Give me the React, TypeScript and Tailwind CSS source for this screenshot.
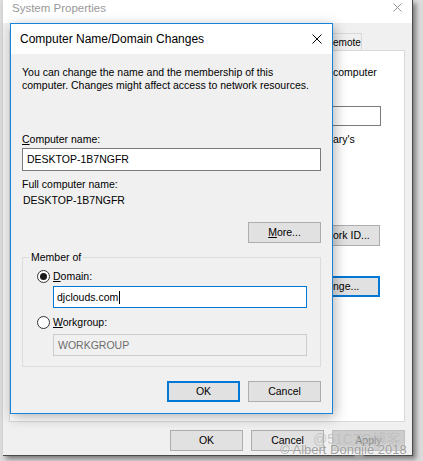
import React from "react";

function XIcon({ className, color }: { className?: string; color: string }) {
  return (
    <svg className={className} viewBox="0 0 10 10" fill="none">
      <path d="M0.5 0.5L9.5 9.5M9.5 0.5L0.5 9.5" stroke={color} strokeWidth="1" />
    </svg>
  );
}

function Btn({ children, className = "" }: { children: React.ReactNode; className?: string }) {
  return (
    <div className={"flex items-center h-[21px] shrink-0 whitespace-nowrap " + className}>
      {children}
    </div>
  );
}

function Radio({ checked }: { checked?: boolean }) {
  return (
    <div className="w-[13px] h-[13px] rounded-full border border-[#333333] bg-white flex items-center justify-center shrink-0">
      {checked && <div className="w-[7px] h-[7px] rounded-full bg-[#1a1a1a]" />}
    </div>
  );
}

export default function App() {
  return (
    <div className="relative w-[423px] h-[461px] overflow-hidden bg-[#dcdcdc] font-['Liberation_Sans',Arial,sans-serif] text-[10.5px] leading-[13px] text-black">
      {/* Background window: System Properties */}
      <div className="ml-[3px] w-[410px] h-[456px] flex flex-col bg-[#f0f0f0] border-r border-b border-[#4a4a4a] shadow-[3px_3px_5px_rgba(0,0,0,0.45)]">
        <div className="h-[23px] shrink-0 bg-white flex items-start justify-between pl-[9px] pr-[10px] pt-[1px]">
          <span className="text-[11.5px] leading-[14px] text-[#999999]">System Properties</span>
          <XIcon className="w-[9px] h-[9px] mt-[2px]" color="#8a8a8a" />
        </div>
        <div className="h-[27px] shrink-0 flex items-end pl-[6px]">
          <div className="w-[90px] h-[20px] bg-white border border-[#d9d9d9] border-b-0" />
          <div className="w-[234px] h-[17px]" />
          <div className="w-[29px] h-[17px] border-t border-r border-[#d9d9d9] flex items-center text-[10px] whitespace-nowrap">
            emote
          </div>
        </div>
        <div className="ml-[6px] w-[396px] h-[372px] shrink-0 bg-white border border-[#d9d9d9] flex">
          <div className="ml-[323px] flex-1 flex flex-col">
            <div className="mt-[15px] whitespace-nowrap">computer</div>
            <div className="mt-[27px] w-[48px] h-[20px] border-y border-r border-[#7a7a7a] bg-white" />
            <div className="mt-[7px] whitespace-nowrap">ary's</div>
            <Btn className="mt-[79px] w-[47px] bg-[#e1e1e1] border-y border-r border-[#adadad]">ork ID...</Btn>
            <Btn className="mt-[30px] w-[47px] bg-[#e1e1e1] border-y-2 border-r-2 border-[#0078d7]">nge...</Btn>
          </div>
        </div>
        <div className="mt-[8px] flex justify-end gap-[8px] pr-[7px]">
          <Btn className="w-[73px] justify-center bg-[#e1e1e1] border border-[#adadad]">OK</Btn>
          <Btn className="w-[73px] justify-center bg-[#e1e1e1] border border-[#adadad]">Cancel</Btn>
          <Btn className="w-[73px] justify-center bg-[#cccccc] border border-[#bfbfbf] text-[#838383]">Apply</Btn>
        </div>
      </div>

      {/* Foreground dialog */}
      <div className="absolute left-[10px] top-[23px] w-[323px] h-[391px] border border-[#1883d7] bg-[#f0f0f0] flex flex-col shadow-[2px_3px_12px_rgba(0,0,0,0.3)]">
        <div className="h-[30px] shrink-0 bg-white flex items-center justify-between pl-[9px] pr-[10px]">
          <span className="text-[12px] leading-[14px]">Computer Name/Domain Changes</span>
          <XIcon className="w-[10px] h-[10px]" color="#000000" />
        </div>
        <div className="flex flex-col px-[11px]">
          <p className="mt-[12px]">
            You can change the name and the membership of this
            <br />
            computer. Changes might affect access to network resources.
          </p>
          <div className="mt-[41px]">
            <span className="underline underline-offset-[1px]">C</span>omputer name:
          </div>
          <div className="mt-[2px] h-[23px] border border-[#7a7a7a] bg-white flex items-center px-[4px]">DESKTOP-1B7NGFR</div>
          <div className="mt-[7px]">Full computer name:</div>
          <div className="mt-[3px] pl-[1px]">DESKTOP-1B7NGFR</div>
          <div className="mt-[15px] flex justify-end">
            <Btn className="w-[73px] justify-center bg-[#e1e1e1] border border-[#adadad]">
              <span>
                <span className="underline underline-offset-[1px]">M</span>ore...
              </span>
            </Btn>
          </div>
          <fieldset className="mt-[8px] border border-[#dcdcdc] pb-[10px] flex flex-col">
            <legend className="ml-[6px] px-[2px] leading-[13px]">Member of</legend>
            <div className="mt-[6px] pl-[14px] flex items-center gap-[3px]">
              <Radio checked />
              <span>
                <span className="underline underline-offset-[1px]">D</span>omain:
              </span>
            </div>
            <div className="mt-[3px] ml-[30px] w-[254px] h-[22px] border border-[#0078d7] bg-white flex items-center px-[3px]">
              <span>djclouds.com</span>
              <div className="w-[1px] h-[13px] bg-black ml-[1px]" />
            </div>
            <div className="mt-[8px] pl-[14px] flex items-center gap-[3px]">
              <Radio />
              <span>
                <span className="underline underline-offset-[1px]">W</span>orkgroup:
              </span>
            </div>
            <div className="mt-[5px] ml-[30px] w-[254px] h-[22px] border border-[#cccccc] bg-[#f0f0f0] flex items-center px-[4px] text-[#6d6d6d]">
              WORKGROUP
            </div>
          </fieldset>
          <div className="mt-[14px] flex justify-end gap-[8px]">
            <Btn className="w-[73px] justify-center bg-[#e1e1e1] border-2 border-[#0078d7]">OK</Btn>
            <Btn className="w-[73px] justify-center bg-[#e1e1e1] border border-[#adadad]">Cancel</Btn>
          </div>
        </div>
      </div>

      {/* Watermarks */}
      <div className="absolute left-[313px] top-[431px] text-[14px] leading-[16px] text-[#bdbdbd]/80 font-['Liberation_Sans','Noto_Sans_CJK_SC',sans-serif] whitespace-nowrap pointer-events-none">
        @51CTO博客
      </div>
      <div className="absolute left-[280px] top-[442px] text-[13px] leading-[15px] text-[#8a8a8a]/80 whitespace-nowrap pointer-events-none [text-shadow:0_0_2px_#ffffff]">
        © Albert Dongjie 2018
      </div>
    </div>
  );
}
